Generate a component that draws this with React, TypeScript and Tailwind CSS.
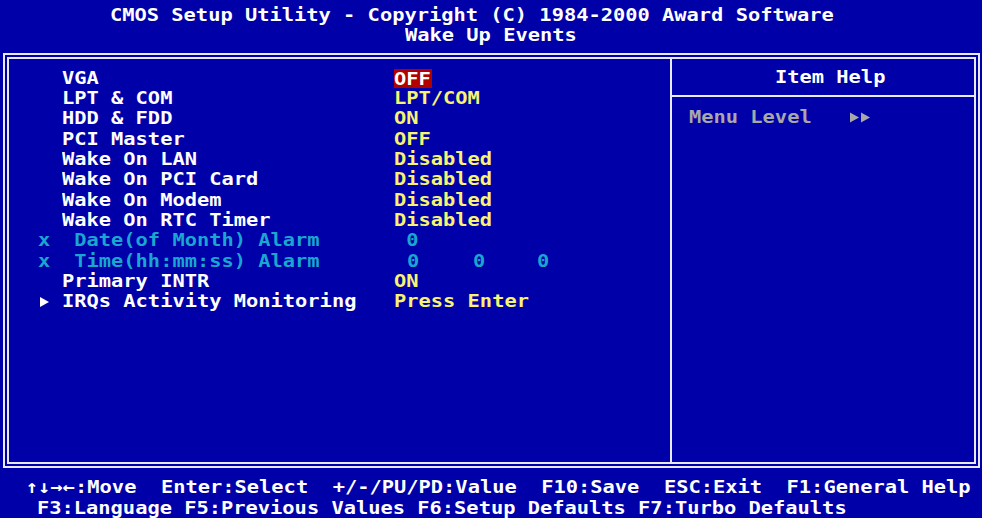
import React from 'react';

type Row = {
  label: string;
  value?: string;
  marker?: 'x' | 'arrow';
  disabled?: boolean;
  highlight?: boolean;
  zeros?: boolean;
};

const rows: Row[] = [
  { label: 'VGA', value: 'OFF', highlight: true },
  { label: 'LPT & COM', value: 'LPT/COM' },
  { label: 'HDD & FDD', value: 'ON' },
  { label: 'PCI Master', value: 'OFF' },
  { label: 'Wake On LAN', value: 'Disabled' },
  { label: 'Wake On PCI Card', value: 'Disabled' },
  { label: 'Wake On Modem', value: 'Disabled' },
  { label: 'Wake On RTC Timer', value: 'Disabled' },
  { label: ' Date(of Month) Alarm', value: ' 0', marker: 'x', disabled: true },
  { label: ' Time(hh:mm:ss) Alarm', marker: 'x', disabled: true, zeros: true },
  { label: 'Primary INTR', value: 'ON' },
  { label: 'IRQs Activity Monitoring', value: 'Press Enter', marker: 'arrow' },
];

// the BIOS font is wider than DejaVu Sans Mono, stretch glyphs to the 12.27px cell
function T({ children, className = '' }: { children: React.ReactNode; className?: string }) {
  return <span className={`inline-block whitespace-pre origin-left scale-x-[1.132] ${className}`}>{children}</span>;
}

function Tri({ className = '' }: { className?: string }) {
  return (
    <svg viewBox="0 0 9 10" className={className} fill="currentColor">
      <path d="M0 0 L9 5 L0 10 Z" />
    </svg>
  );
}

function SetupRow({ row }: { row: Row }) {
  const cyan = 'text-[#19a6cf]';
  return (
    <div className="flex h-[20.35px]">
      <span className={`w-[24px] flex items-center ${row.disabled ? cyan : 'text-white'}`}>
        {row.marker === 'x' && <T>x</T>}
        {row.marker === 'arrow' && <Tri className="w-[9px] h-[10px] ml-[2px] mt-[1px]" />}
      </span>
      <span className={`w-[332px] ${row.disabled ? cyan : 'text-white'}`}>
        <T>{row.label}</T>
      </span>
      {row.zeros ? (
        <span className={`flex ${cyan}`}>
          <T className="ml-[13px]">0</T>
          <T className="ml-[55px]">0</T>
          <T className="ml-[53px]">0</T>
        </span>
      ) : row.highlight ? (
        <span className="inline-block h-[19px] w-[38px] leading-[19px] mt-[1px] bg-[#b00000] text-white">
          <T>{row.value}</T>
        </span>
      ) : (
        <span className={row.disabled ? cyan : 'text-[#f8f472]'}>
          <T>{row.value}</T>
        </span>
      )}
    </div>
  );
}

export default function App() {
  return (
    <div className="w-[982px] h-[518px] bg-[#0000a8] flex flex-col overflow-hidden font-['DejaVu_Sans_Mono',monospace] font-bold text-[18px] leading-[20.35px] text-white">
      {/* Title */}
      <div className="h-[53px] pt-[5px]">
        <div className="pl-[110px]">
          <T>CMOS Setup Utility - Copyright (C) 1984-2000 Award Software</T>
        </div>
        <div className="pl-[405px]">
          <T>Wake Up Events</T>
        </div>
      </div>

      {/* Double frame */}
      <div className="h-[415px] ml-[3px] mr-[2px] border-2 border-[#e8e8ff] p-[2px]">
        <div className="h-full border-2 border-[#e8e8ff] flex">
          <div className="w-[663px] border-r-2 border-[#e8e8ff] pt-[8.7px] pl-[29px]">
            {rows.map((r) => (
              <SetupRow key={r.label} row={r} />
            ))}
          </div>
          <div className="flex-1 flex flex-col">
            <div className="h-[38px] border-b-2 border-[#e8e8ff] flex items-center pl-[103px]">
              <T>Item Help</T>
            </div>
            <div className="pt-[9.7px] pl-[17px] flex items-center text-[#a8a8a8]">
              <T>Menu Level</T>
              <span className="flex gap-[2px] ml-[53px] mt-[1px]">
                <Tri className="w-[9px] h-[11px]" />
                <Tri className="w-[9px] h-[11px]" />
              </span>
            </div>
          </div>
        </div>
      </div>

      {/* Key help */}
      <div className="pt-[9.7px]">
        <div className="pl-[26px]">
          <T>↑↓→←:Move  Enter:Select  +/-/PU/PD:Value  F10:Save  ESC:Exit  F1:General Help</T>
        </div>
        <div className="pl-[37px]">
          <T>F3:Language F5:Previous Values F6:Setup Defaults F7:Turbo Defaults</T>
        </div>
      </div>
    </div>
  );
}
